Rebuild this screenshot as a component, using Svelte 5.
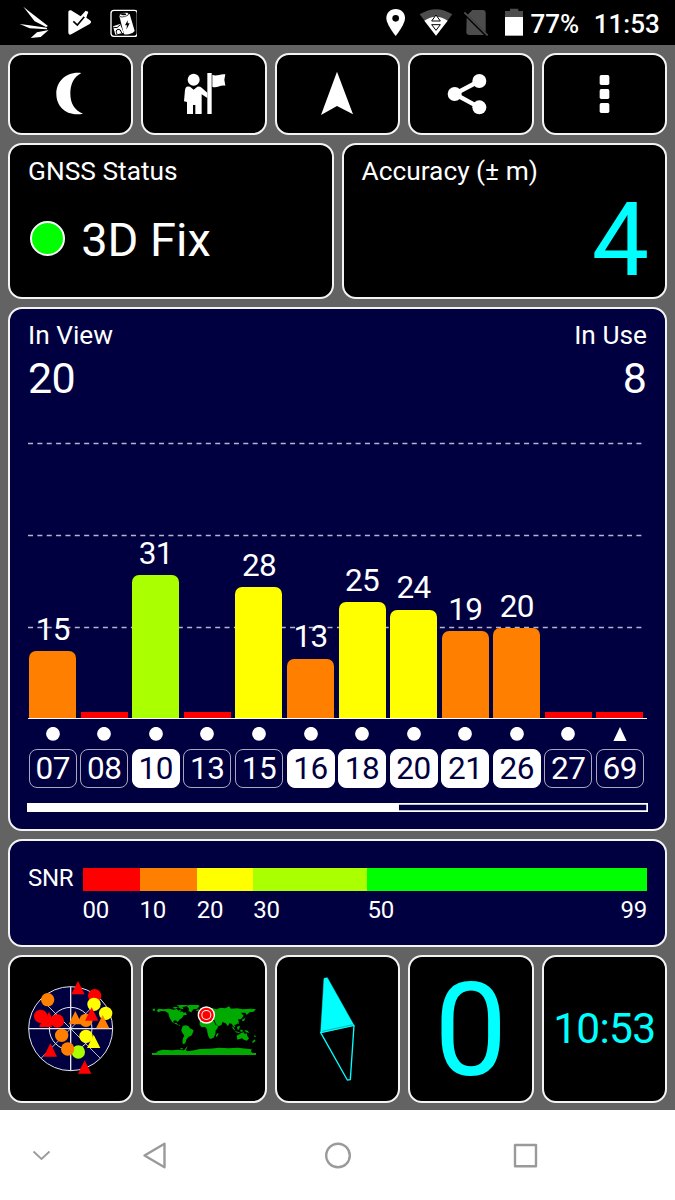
<script>
  const O = '#ff8000', Y = '#ffff00', L = '#aaff00', R = '#ff0000', G = '#00ff00';
  const sats = [
    { id: '07', snr: 15, h: 67, c: O },
    { id: '08', c: R },
    { id: '10', snr: 31, h: 143, c: L, used: true },
    { id: '13', c: R },
    { id: '15', snr: 28, h: 131, c: Y },
    { id: '16', snr: 13, h: 59.5, c: O, used: true },
    { id: '18', snr: 25, h: 116, c: Y, used: true },
    { id: '20', snr: 24, h: 108.5, c: Y, used: true },
    { id: '21', snr: 19, h: 87, c: O, used: true },
    { id: '26', snr: 20, h: 90, c: O, used: true },
    { id: '27', c: R },
    { id: '69', c: R, tri: true }
  ];
  const scale = [
    { v: '00', w: 57, c: R },
    { v: '10', w: 57.3, c: O },
    { v: '20', w: 56.5, c: Y },
    { v: '30', w: 114.2, c: L },
    { v: '50', w: 279.5, c: G, end: '99' }
  ];
  const sky = [
    ['t', 234, 114, R], ['c', 284, 137, R], ['c', 143, 149, O], ['c', 282, 163, Y],
    ['c', 317, 190, Y], ['c', 122, 199, R], ['t', 137, 212, R], ['t', 147, 206, R], ['c', 172, 213, R],
    ['c', 258, 211, O], ['t', 226, 204, O], ['t', 275, 193, R], ['t', 308, 216, O],
    ['c', 185, 256, O], ['c', 258, 259, Y], ['t', 281, 275, Y], ['t', 151, 301, R],
    ['c', 235, 306, L], ['c', 203, 297, O], ['t', 254, 352, R]
  ];
  const grids = [40.5, 132.5, 224.5];
</script>

<div class="screen">
  <header class="status">
    <svg class="left" width="120" height="45" viewBox="50 0 360 135" fill="#fff">
      <path d="M69 20L84 32L143 78L137 81L103 64ZM58 72L82 75L139 83L141 88L88 85ZM91 114L110 97L145 90L121 111Z" />
      <path d="M204 37Q204 29 212 31L241 49L256 32L263 36L258 53L269 61Q276 67 268 72L213 103Q204 107 204 97Z" />
      <path d="M219 64L231 75L252 50" fill="none" stroke="#000" stroke-width="5" />
      <path d="M252 50L262 35" fill="none" stroke="#fff" stroke-width="5" />
      <rect x="332" y="31" width="79" height="78" rx="9" fill="none" stroke="#fff" stroke-width="4" />
      <path d="M357 48L388 42L403 93Q393 105 371 103Z" />
      <ellipse cx="371" cy="44" rx="14" ry="6" transform="rotate(-12 371 44)" stroke="#000" stroke-width="2" />
      <ellipse cx="370" cy="43" rx="8" ry="3" fill="#000" />
      <path d="M382 61L374 76L380 76L378 89L388 70L382 70Z" fill="#000" />
      <path d="M338 79L359 72L370 98L345 104Z" />
      <path d="M339 82Q351 87 359 75M350 102Q344 91 353 88Q361 86 364 99" fill="none" stroke="#000" stroke-width="3" />
    </svg>
    <svg class="right" width="142" height="45" viewBox="45 0 426 135">
      <path d="M77 27C60 27 49 39 49 54C49 74 77 108 77 108C77 108 105 74 105 54C105 39 94 27 77 27Z" fill="#fff" />
      <circle cx="77" cy="55" r="10" fill="#000" />
      <path d="M149 43Q198 12 247 43L198 107Z" fill="#4d4d4d" />
      <path d="M163 62Q198 38 233 62L198 107Z" fill="#fff" />
      <path d="M198 45L185 63H211ZM198 91L185 74H211Z" fill="#fff" stroke="#000" stroke-width="3" />
      <path d="M307 30H340Q347 31 347 38V97L293 44Z" fill="#4d4d4d" />
      <path d="M290 53L342 105H296Q289 104 289 97Z" fill="#4d4d4d" />
      <path d="M283 37L353 106" stroke="#4d4d4d" stroke-width="5" />
      <path d="M405 52V33H420V26H445V33H459V52Z" fill="#4d4d4d" />
      <rect x="405" y="51" width="54" height="56" fill="#fff" />
    </svg>
    <span class="pct">77%</span>
    <span class="clock">11:53</span>
  </header>

  <main>
    <div class="row five tools">
      <button class="tile" aria-label="Night">
        <svg width="60" height="60" viewBox="122 192 180 180"><path d="M243 219C195 214 168 247 168 281C168 320 198 350 248 341C222 331 210 308 210 281C210 253 220 231 243 219Z" fill="#fff" /></svg>
      </button>
      <button class="tile" aria-label="Waypoint">
        <svg width="60" height="60" viewBox="522 192 180 180" fill="#fff">
          <circle cx="581" cy="239" r="18" />
          <path d="M560 260Q565 259 570 260L581 269L592 260Q599 258 605 263L622 278V294L605 283V342H586V315H579V342H561V306L552 304L555 270Q556 262 560 260Z" />
          <path d="M622 219H635V342H622Z" />
          <path d="M637 224C650 231 660 220 676 223L673 239L676 257C660 253 650 266 637 260Z" />
        </svg>
      </button>
      <button class="tile" aria-label="Navigate">
        <svg width="60" height="60" viewBox="248 72 180 180"><path d="M338 95L386 223L338 198L290 225Z" fill="#fff" /></svg>
      </button>
      <button class="tile" aria-label="Share">
        <svg width="60" height="60" viewBox="213 192 180 180" fill="#fff">
          <path d="M328 243L254 282L328 322" fill="none" stroke="#fff" stroke-width="13" />
          <circle cx="328" cy="243" r="21" /><circle cx="254" cy="282" r="21" /><circle cx="328" cy="322" r="21" />
        </svg>
      </button>
      <button class="tile" aria-label="Menu">
        <svg width="60" height="60" viewBox="613 192 180 180" fill="#fff">
          <rect x="690" y="225" width="29" height="30" rx="5" /><rect x="690" y="267" width="29" height="30" rx="5" /><rect x="690" y="309" width="29" height="30" rx="5" />
        </svg>
      </button>
    </div>

    <div class="row two">
      <section class="tile card">
        <h2>GNSS Status</h2>
        <div class="fix"><i></i><span>3D Fix</span></div>
      </section>
      <section class="tile card">
        <h2>Accuracy (± m)</h2>
        <div class="acc">4</div>
      </section>
    </div>

    <section class="tile card view">
      <div class="split"><h2>In View</h2><h2>In Use</h2></div>
      <div class="split count"><span>20</span><span>8</span></div>
      <div class="chart">
        <svg class="grid" width="619" height="315">
          {#each grids as y}
            <line x1="0" x2="616" y1={y} y2={y} stroke="#b5b5cb" stroke-width="1.4" stroke-dasharray="5 4.36" />
          {/each}
        </svg>
        <div class="cols">
          {#each sats as s}
            <div class="col">
              {#if s.snr}<span>{s.snr}</span>{/if}
              <div class="bar" class:low={!s.snr} style="height:{s.h ?? 6.5}px;background:{s.c}"></div>
            </div>
          {/each}
        </div>
      </div>
      <div class="cols marks">
        {#each sats as s}
          <svg width="14" height="14" viewBox="0 0 14 14" fill="#fff">
            {#if s.tri}<path d="M7 0L13.6 14H.4Z" />{:else}<circle cx="7" cy="6.8" r="6.9" />{/if}
          </svg>
        {/each}
      </div>
      <div class="cols ids">
        {#each sats as s}<div><b class:used={s.used}>{s.id}</b></div>{/each}
      </div>
      <div class="scroll"><div></div></div>
    </section>

    <section class="tile card snr">
      <span class="name">SNR</span>
      {#each scale as s}
        <div class="seg" style="width:{s.w}px">
          <div style="background:{s.c}"></div>
          <p><span>{s.v}</span>{#if s.end}<span>{s.end}</span>{/if}</p>
        </div>
      {/each}
    </section>

    <div class="row five pages">
      <div class="tile">
        <svg width="88" height="97.33" viewBox="81 90 264 292">
          <circle cx="212" cy="236" r="126" fill="#000040" />
          <g fill="none" stroke="#e4e4ee" stroke-width="3">
            <circle cx="212" cy="236" r="126" /><circle cx="212" cy="236" r="64" />
            <path d="M212 110V362M86 236H338" stroke-width="4" />
            <path d="M123 147L301 325M301 147L123 325" stroke-width="2.5" />
          </g>
          {#each sky as [k, x, y, c]}
            {#if k === 'c'}<circle cx={x} cy={y} r="20" fill={c} />{:else}<path d="M{x} {y - 21}L{x + 20} {y + 19}H{x - 20}Z" fill={c} />{/if}
          {/each}
        </svg>
      </div>
      <div class="tile">
        <svg class="map" width="104" height="50" viewBox="42 75 312 150" fill="#00aa00">
          <path d="M44 86H51V92H44ZM56 92L61 86L78 88L91 86L108 89L116 86L121 92L130 88L126 97L133 94L137 98L143 97L147 104L137 106L132 114L124 119L120 126L113 121L106 123L108 129L115 128L120 134L128 135L124 137L113 132L102 126L94 112L91 100L82 94L70 93L61 97Z" />
          <path d="M103 84L110 80L119 82L125 77H117V75H150L145 79L133 82L137 88L128 86L121 82L112 86ZM146 78L153 75H181L185 78L178 86L166 88L160 97L151 93L153 86ZM175 89L184 88L181 93H175Z" />
          <path d="M134 138L142 136L151 138L156 145L167 151L164 159L160 167L151 171L145 179L142 190L135 193L133 185L135 175L139 167L132 157L130 151Z" />
          <path d="M185 122L191 117L207 117L216 121L227 122L232 134L241 137L238 146L233 151L232 162L227 173L216 177L211 169L208 157L207 148L201 141L191 142L185 135Z" />
          <path d="M190 110V103L197 99L202 90L213 83L224 85L235 88L248 83L262 85L273 79L279 86L298 85L314 88L336 86L354 88L347 95L335 97L326 105L322 98L309 98L317 107L309 118L300 118L303 127L294 134L289 134L292 143L286 139L281 131L274 130L270 139L263 130L253 126L251 134L242 139L234 133L229 121L219 116L223 109L213 113L208 107L200 110Z" />
          <path d="M281 138L288 143L292 153L285 147ZM297 140L306 137L304 146L299 151ZM307 149H314V155H307ZM319 150L329 152L334 158L324 157ZM292 154L306 157L303 159L291 156ZM317 157L321 163L325 158L328 168L333 175L327 182L319 180L312 175L298 179L296 167L305 162L309 159ZM348 179H352V184L343 190V185ZM239 159L242 161L238 169L234 171V165ZM179 98H188V106H180ZM312 119L320 115L323 109L319 122L313 124ZM300 127L303 131L299 132ZM349 165L353 168V171H349Z" />
          <path d="M42 219H54L60 213L74 209L102 211L120 209L138 211L148 199V202L143 211L149 214L168 211L185 207L217 206L242 203L272 205L300 203L325 206L341 208L339 215L344 219H354V225H42ZM127 205H135V208H127Z" />
          <g><circle cx="205" cy="105" r="26" fill="#fff" /><circle cx="205" cy="105" r="22" fill="#f00" /><circle cx="205" cy="105" r="15" fill="#fff" /><circle cx="205" cy="105" r="12" fill="#f00" /></g>
        </svg>
      </div>
      <div class="tile">
        <svg width="40" height="106" viewBox="142 77 120 318" stroke="#0ff" stroke-width="4" stroke-linejoin="round">
          <path d="M163 84L173 82L253 225L153 247Z" fill="#0ff" stroke-width="1.5" />
          <path d="M153 247L253 225L242 388L233 389Z" fill="none" />
          <path d="M157 243L249 223" stroke="#087080" stroke-width="1.5" />
        </svg>
      </div>
      <div class="tile zero">0</div>
      <div class="tile time">10:53</div>
    </div>
  </main>

  <nav>
    <svg width="675" height="90" viewBox="0 1110 675 90" fill="none" stroke="#9a9a9a" stroke-width="2.4" stroke-linejoin="round">
      <path d="M33.5 1151.5L41.5 1159L49.5 1151.5" stroke-width="1.8" stroke-linejoin="miter" />
      <path d="M144.5 1155.5L164.5 1143.7V1167.3Z" />
      <circle cx="338" cy="1155.5" r="11.8" />
      <rect x="515" y="1145" width="21" height="21.2" />
    </svg>
  </nav>
</div>

<style>
  :global(body) { margin: 0; }
  .screen { width: 675px; height: 1200px; overflow: hidden; background: #636363; color: #fff; font-family: Roboto, sans-serif; display: flex; flex-direction: column; }
  .status { height: 45px; flex: none; background: #000; display: flex; font-size: 26px; font-weight: 500; line-height: 48px; white-space: nowrap; }
  .left { margin-left: 16.67px; }
  .right { margin-left: 248.33px; }
  .pct { width: 63.3px; margin-left: 3.5px; }
  main { height: 1065px; flex: none; box-sizing: border-box; padding: 8px 8px 7px; display: flex; flex-direction: column; gap: 8px; }
  .row { display: grid; gap: 8px; }
  .five { grid-template-columns: repeat(5, 1fr); }
  .two { grid-template-columns: 1fr 1fr; height: 156px; }
  .tools { height: 82px; }
  .pages { height: 148px; }
  .tile { box-sizing: border-box; min-width: 0; margin: 0; padding: 0; border: 2px solid #f4f4f4; border-radius: 14px; background: #000; display: flex; align-items: center; justify-content: center; }
  .tile svg { display: block; flex: none; }
  .tile .map { margin-top: 2px; }
  .card { display: block; padding: 11px 18px 0; }
  h2 { margin: 0; font-size: 26.3px; font-weight: 400; line-height: 30px; }
  .fix { display: flex; align-items: center; margin-top: 26px; height: 56px; font-size: 47px; line-height: 56px; }
  .fix i { box-sizing: border-box; width: 35px; height: 35px; border: 2px solid #fff; border-radius: 50%; background: #0f0; margin: 0 16.2px 3px 2px; }
  .acc { color: #0ff; font-size: 102px; line-height: 110px; text-align: right; margin: -1px -2px 0 0; }
  .view, .snr { background: #000040; }
  .view { height: 524px; }
  .split { display: flex; justify-content: space-between; }
  .count { margin-top: 3px; font-size: 43px; line-height: 50px; letter-spacing: -0.6px; }
  .count span:last-child { letter-spacing: 0; }
  .chart { position: relative; height: 315px; border-bottom: 1px solid #fff; }
  .grid { position: absolute; left: 0; top: 0; }
  .cols { position: relative; display: grid; grid-template-columns: repeat(12, 51.57px); justify-items: center; margin-left: -1.1px; }
  .col { height: 315px; display: flex; flex-direction: column; justify-content: flex-end; align-items: center; font-size: 31.5px; line-height: 32px; letter-spacing: -0.7px; }
  .col span { margin-bottom: 5.4px; }
  .bar { width: 47px; flex: none; border-radius: 7px 7px 0 0; }
  .low { border-radius: 0; }
  .marks { margin-top: 8px; height: 14px; }
  .ids { margin-top: 8px; }
  .ids b { display: block; box-sizing: border-box; width: 48px; height: 39px; border: 1px solid #a9a9bb; border-radius: 8px; font-size: 31.5px; line-height: 37px; font-weight: 400; text-align: center; letter-spacing: -0.4px; }
  .ids .used { background: #fff; border-color: #fff; color: #000040; }
  .scroll { height: 9px; margin: 15px -1px 0; box-shadow: inset 0 0 0 1.7px #fff; }
  .scroll div { width: 372px; height: 100%; background: #fff; }
  .snr { height: 108px; display: flex; align-items: flex-start; justify-content: flex-start; padding-top: 27px; font-size: 24px; letter-spacing: -0.3px; }
  .name { width: 54.5px; flex: none; line-height: 21px; }
  .seg { flex: none; }
  .seg div { height: 23px; }
  .seg p { margin: 5px 0 0; line-height: 28px; display: flex; justify-content: space-between; }
  .zero { color: #0ff; font-size: 130px; line-height: 140px; padding-top: 4px; }
  .time { color: #0ff; font-size: 42.5px; line-height: 50px; letter-spacing: -0.7px; }
  nav { height: 90px; flex: none; background: #fff; }
  nav svg { display: block; }
</style>
